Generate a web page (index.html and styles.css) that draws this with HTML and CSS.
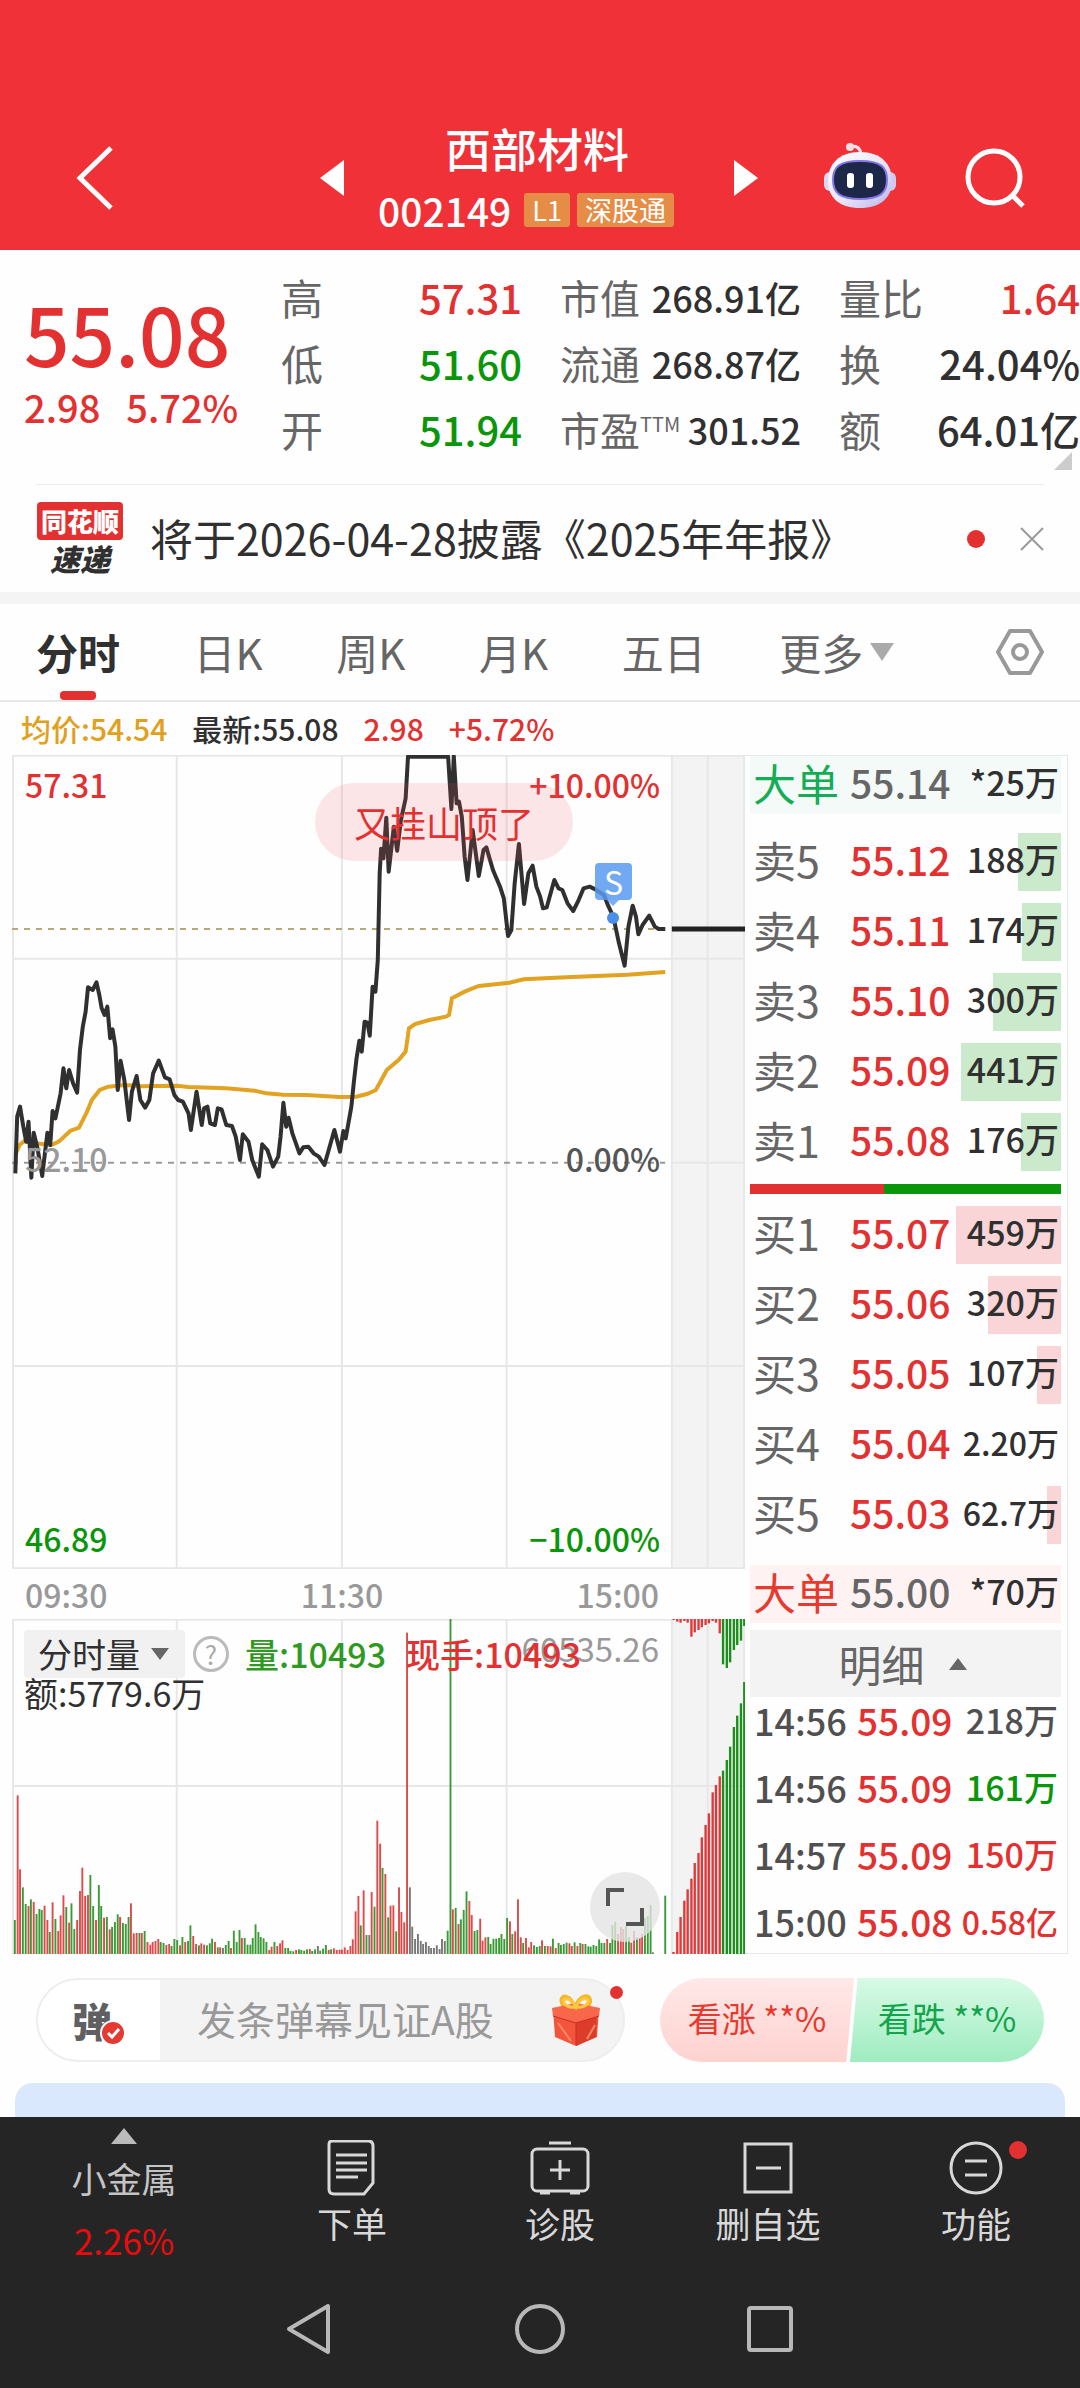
FILE: index.html
```html
<!DOCTYPE html>
<html lang="zh-CN">
<head>
    <meta charset="UTF-8">
    <meta name="viewport" content="width=device-width, initial-scale=1.0">
    <title>西部材料 002149</title>
    <link rel="stylesheet" href="styles.css">
</head>
<body>
    <header class="top-bar">
        <button class="icon-btn back" aria-label="返回">
            <svg width="40" height="66" viewBox="0 0 40 66"><path d="M36 3 5 33l31 30" fill="none" stroke="#fff" stroke-width="5"/></svg>
        </button>
        <div class="stock-switch">
            <button class="icon-btn" aria-label="上一只">
                <svg width="24" height="36" viewBox="0 0 24 36"><path d="M24 0v36L0 18z" fill="#fff"/></svg>
            </button>
            <div class="stock-title">
                <h1>西部材料</h1>
                <div class="stock-code">002149 <span class="tag">L1</span><span class="tag">深股通</span></div>
            </div>
            <button class="icon-btn" aria-label="下一只">
                <svg width="24" height="36" viewBox="0 0 24 36"><path d="M0 0v36l24-18z" fill="#fff"/></svg>
            </button>
        </div>
        <button class="icon-btn" aria-label="智能助手">
            <svg width="72" height="68" viewBox="0 0 72 68">
                <defs>
                    <linearGradient id="shell" x1="0" y1="0" x2="1" y2="1"><stop offset="0" stop-color="#fff"/><stop offset=".55" stop-color="#e9e5f8"/><stop offset="1" stop-color="#b9b3e8"/></linearGradient>
                </defs>
                <path d="M26 4q10-1 11 8" fill="none" stroke="#f6e4ee" stroke-width="3"/>
                <circle cx="26" cy="5" r="4" fill="#fbdde2"/>
                <rect x="0" y="30" width="14" height="19" rx="6" fill="#dcd8f4"/>
                <rect x="58" y="30" width="14" height="19" rx="6" fill="#cfcaf0"/>
                <path d="M36 10c21 0 32 12 32 29S56 66 36 66 4 56 4 39s11-29 32-29z" fill="url(#shell)"/>
                <path d="M36 19c21 0 27 6 27 19s-7 19-27 19S9 51 9 38s6-19 27-19z" fill="#1d2747" stroke="#8377e8" stroke-width="2"/>
                <rect x="23" y="31" width="7" height="15" rx="3" fill="#fff"/>
                <rect x="42" y="31" width="7" height="15" rx="3" fill="#fff"/>
            </svg>
        </button>
        <button class="icon-btn" aria-label="搜索">
            <svg width="62" height="62" viewBox="0 0 62 62" fill="none" stroke="#fff" stroke-width="5"><circle cx="30" cy="30" r="26"/><path d="m48 48 11 11"/></svg>
        </button>
    </header>

    <section class="quote">
        <div class="quote-main">
            <div class="last-price">55.08</div>
            <div class="change"><span>2.98</span><span>5.72%</span></div>
        </div>
        <dl>
            <div><dt>高</dt><dd class="up">57.31</dd></div>
            <div><dt>低</dt><dd class="down">51.60</dd></div>
            <div><dt>开</dt><dd class="down">51.94</dd></div>
        </dl>
        <dl class="compact">
            <div><dt>市值</dt><dd>268.91亿</dd></div>
            <div><dt>流通</dt><dd>268.87亿</dd></div>
            <div><dt>市盈<sup>TTM</sup></dt><dd>301.52</dd></div>
        </dl>
        <dl>
            <div><dt>量比</dt><dd class="up">1.64</dd></div>
            <div><dt>换</dt><dd>24.04%</dd></div>
            <div><dt>额</dt><dd>64.01亿</dd></div>
        </dl>
        <i class="corner"></i>
    </section>

    <section class="notice">
        <div class="notice-logo"><b>同花顺</b><em>速递</em></div>
        <a href="#">将于2026-04-28披露《2025年年报》</a>
        <i class="dot"></i>
        <button class="icon-btn" aria-label="关闭">
            <svg width="24" height="24" viewBox="0 0 24 24" stroke="#999" stroke-width="2"><path d="m1 1 22 22M23 1 1 23"/></svg>
        </button>
    </section>

    <nav class="tabs">
        <button class="active">分时</button>
        <button>日K</button>
        <button>周K</button>
        <button>月K</button>
        <button>五日</button>
        <button>更多<svg width="24" height="18" viewBox="0 0 24 18"><path d="M0 0h24L12 18z" fill="#aaa"/></svg></button>
        <button class="setting" aria-label="设置">
            <svg width="48" height="48" viewBox="0 0 48 48" fill="none" stroke="#999" stroke-width="4"><path d="M14 3h20l12 21-12 21H14L2 24z" stroke-linejoin="round"/><circle cx="24" cy="24" r="7"/></svg>
        </button>
    </nav>

    <div class="avg-line">
        <span class="avg">均价:54.54</span><span>最新:55.08</span><span class="up">2.98</span><span class="up">+5.72%</span>
    </div>

    <main class="board">
        <div class="charts">
            <div class="price-chart">
                <svg viewBox="26 45 1553 2442" preserveAspectRatio="none">
                    <rect class="side" x="1424" y="45" width="155" height="2442"/>
                    <path class="grid" d="M28 47H1579M28 656H1579M1424 1268H1579M28 1878H1579M28 2485H1579M28 45V2487M375 45V2487M725 45V2487M1074 45V2487M1424 45V2487M1500 45V2487M1577 45V2487"/>
                    <path class="dash last" d="M26 567H1410"/>
                    <path class="dash" d="M26 1268H1410"/>
                    <polyline class="avg-path" id="avg-path"/>
                    <polyline class="price-path" id="price-path"/>
                    <path class="auction" d="M1424 567H1579"/>
                </svg>
                <span class="lb high up">57.31</span>
                <span class="lb high-pct up">+10.00%</span>
                <span class="lb mid">52.10</span>
                <span class="lb mid-pct">0.00%</span>
                <span class="lb low down">46.89</span>
                <span class="lb low-pct down">−10.00%</span>
                <span class="bubble">又挂山顶了</span>
                <span class="sell-mark">S</span>
            </div>
            <div class="time-axis"><span>09:30</span><span>11:30</span><span>15:00</span></div>
            <div class="vol-chart">
                <svg viewBox="26 57 1553 1005" preserveAspectRatio="none">
                    <rect class="side" x="1424" y="57" width="155" height="1005"/>
                    <path class="grid" d="M28 59H1579M28 558H1579M28 57V1062M375 57V1062M725 57V1062M1074 57V1062M1424 57V1062M1500 57V1062M1577 57V1062"/>
                    <g id="vol-bars"></g>
                </svg>
                <div class="vol-info">
                    <button class="vol-type">分时量<svg width="18" height="12" viewBox="0 0 18 12"><path d="M0 0h18L9 12z" fill="#666"/></svg></button>
                    <button class="help" aria-label="说明">?</button>
                    <span class="vol">量:10493</span>
                    <span class="up">现手:10493</span>
                </div>
                <div class="vol-amount">额:5779.6万</div>
                <span class="vol-max">60535.26</span>
                <button class="expand" aria-label="全屏">
                    <svg width="38" height="38" viewBox="0 0 38 38" fill="none" stroke="#555" stroke-width="4"><path d="M2 18V2h16M36 20v16H20"/></svg>
                </button>
            </div>
        </div>

        <div class="book">
            <table class="big sell-big"><tr><th>大单</th><td class="price">55.14</td><td class="qty">*25万</td></tr></table>
            <table id="sell"></table>
            <div class="ratio"><i style="width:43%"></i></div>
            <table id="buy"></table>
            <table class="big buy-big"><tr><th>大单</th><td class="price">55.00</td><td class="qty">*70万</td></tr></table>
            <button class="detail">明细<svg width="18" height="12" viewBox="0 0 18 12"><path d="M0 12h18L9 0z" fill="#666"/></svg></button>
            <table class="ticks">
                <tr><th>14:56</th><td class="price">55.09</td><td class="qty flat">218万</td></tr>
                <tr><th>14:56</th><td class="price">55.09</td><td class="qty down">161万</td></tr>
                <tr><th>14:57</th><td class="price">55.09</td><td class="qty up">150万</td></tr>
                <tr><th>15:00</th><td class="price">55.08</td><td class="qty small up">0.58亿</td></tr>
            </table>
        </div>
    </main>

    <section class="danmu">
        <div class="danmu-box">
            <button class="danmu-switch" aria-label="弹幕开关">弹
                <svg width="26" height="26" viewBox="0 0 26 26"><circle cx="13" cy="13" r="12" fill="#e43a32" stroke="#fff" stroke-width="2"/><path d="m8 13 4 4 7-8" fill="none" stroke="#fff" stroke-width="3"/></svg>
            </button>
            <input type="text" placeholder="发条弹幕见证A股" aria-label="弹幕">
            <svg class="gift" width="50" height="54" viewBox="0 0 50 54">
                <path d="M24 16C20 0 8 1 11 10c1 5 8 6 13 6 6 0 14-1 15-7C40 0 28 1 24 16z" fill="none" stroke="#f8b62c" stroke-width="4"/>
                <path d="m2 16 23-5 23 5-2 28-21 9L4 44z" fill="#f2553b"/>
                <path d="m25 24 21-6-1 26-20 9z" fill="#dd3c2b"/>
                <path d="m1 15 24-5 24 5-1 8-23 7-23-7z" fill="#f9674a"/>
                <path d="m2 23 23 7 23-7M25 30v22" fill="none" stroke="#c9301f" stroke-width="1"/>
                <path d="m7 30 13 18M36 46l8-14" stroke="#ff8a66" stroke-width="2"/>
                <path d="M25 14C20 4 11 4 13 10c1 3 7 5 12 4 5 1 11-1 12-5 1-5-8-5-12 5z" fill="none" stroke="#fbc93f" stroke-width="3"/>
            </svg>
            <i class="dot"></i>
        </div>
        <div class="vote">
            <button class="vote-up">看涨 **%</button>
            <button class="vote-down">看跌 **%</button>
        </div>
    </section>
    <div class="next-card"></div>

    <footer>
        <nav class="tool-bar">
            <a href="#" class="sector">
                <svg width="26" height="16" viewBox="0 0 26 16"><path d="M0 16h26L13 0z" fill="#bbb"/></svg>
                <span>小金属</span>
                <strong>2.26%</strong>
            </a>
            <a href="#">
                <svg width="56" height="56" viewBox="0 0 56 56"><path d="M8 1h36q5 0 5 5v37l-9 11H10q-5 0-5-5V4q0-3 3-3z"/><path d="M12 15h31M12 23h31M12 30h31M12 37h22"/></svg>
                <span>下单</span>
            </a>
            <a href="#">
                <svg width="60" height="56" viewBox="0 0 60 56"><rect x="2" y="9" width="56" height="42" rx="5"/><path d="M19 3h22M30 20v20M20 30h20M10 53h10M40 53h10"/></svg>
                <span>诊股</span>
            </a>
            <a href="#">
                <svg width="52" height="56" viewBox="0 0 52 56"><path d="M3 4h46v48H3zM14 28h25"/></svg>
                <span>删自选</span>
            </a>
            <a href="#">
                <svg width="54" height="56" viewBox="0 0 54 56"><circle cx="27" cy="28" r="25"/><path d="M16 21h22M16 35h22"/></svg>
                <span>功能</span>
                <i class="dot"></i>
            </a>
        </nav>
        <div class="sys-nav">
            <button class="icon-btn" aria-label="返回"><svg width="50" height="54" viewBox="0 0 50 54"><path d="M43 4v46L4 27z"/></svg></button>
            <button class="icon-btn" aria-label="主页"><svg width="50" height="54" viewBox="0 0 50 54"><circle cx="25" cy="27" r="23"/></svg></button>
            <button class="icon-btn" aria-label="最近任务"><svg width="50" height="54" viewBox="0 0 50 54"><rect x="4" y="6" width="42" height="42" rx="2"/></svg></button>
        </div>
    </footer>

    <script src="chart.js"></script>
</body>
</html>
```
FILE: styles.css
```css
:root {
  --red: #e33030;
  --green: #0a960a;
  --brand: #f03137;
  --text: #303030;
  --gray: #666;
  --line: #e6e8e8;
}

* { box-sizing: border-box; }

body {
  margin: 0;
  background: #fefefe;
  color: var(--text);
  font-family: "Noto Sans CJK SC", sans-serif;
  font-size: 36px;
}

button {
  font: inherit;
  color: inherit;
  border: none;
  background: none;
  padding: 0;
  cursor: pointer;
}

a { color: inherit; text-decoration: none; }
h1, dl, dd { margin: 0; }
svg { display: block; }

.icon-btn { display: flex; }
.up { color: var(--red); }
.down { color: var(--green); }
.dot {
  width: 18px;
  height: 18px;
  border-radius: 50%;
  background: var(--red);
}

/* 顶部 */
.top-bar {
  display: flex;
  align-items: center;
  height: 250px;
  padding: 112px 54px 6px 75px;
  background: var(--brand);
  color: #fff;
}
.back { margin-right: auto; }
.stock-switch {
  display: flex;
  align-items: center;
  justify-content: space-between;
  width: 438px;
  margin-right: 66px;
}
.stock-switch + .icon-btn { margin-right: 68px; margin-bottom: 4px; }
.stock-title { text-align: center; }
.stock-title h1 {
  font-size: 46px;
  line-height: 64px;
  font-weight: 500;
}
.stock-code {
  display: flex;
  align-items: center;
  gap: 7px;
  margin-right: 26px;
  font-size: 39px;
  line-height: 62px;
  font-weight: 500;
}
.stock-title h1 { margin-right: 4px; }
.tag {
  padding: 0 8px;
  border-radius: 3px;
  background: #e58d47;
  font-size: 27px;
  line-height: 34px;
  font-weight: 400;
}
.stock-code .tag:first-of-type { margin-left: 6px; }

/* 行情 */
.quote {
  position: relative;
  display: grid;
  grid-template-columns: 219px 1fr 1fr 1fr;
  gap: 38px;
  height: 234px;
  padding: 14px 0 0 24px;
}
.quote-main { color: var(--red); font-weight: 500; }
.last-price {
  margin-top: 24px;
  font-size: 80px;
  line-height: 88px;
}
.change {
  display: flex;
  gap: 26px;
  font-size: 38px;
  line-height: 62px;
}
.quote dl div {
  display: flex;
  justify-content: space-between;
  align-items: center;
  height: 66px;
}
.quote dt { font-size: 42px; color: var(--gray); line-height: 60px; }
.quote dd { font-size: 40px; line-height: 60px; font-weight: 500; }
.quote .compact dt { font-size: 40px; }
.quote .compact dd { font-size: 36px; }
.quote sup { font-size: 20px; line-height: 20px; vertical-align: 14px; }
.corner {
  position: absolute;
  right: 8px;
  bottom: 14px;
  border-left: 18px solid transparent;
  border-bottom: 18px solid #ccc;
}

/* 公告 */
.notice {
  display: flex;
  align-items: center;
  height: 108px;
  margin: 0 36px;
  border-top: 1px solid #eee;
  font-size: 43px;
}
.notice a { margin: 0 auto 4px 26px; line-height: 60px; }
.notice .dot { margin-right: 35px; }
.notice-logo {
  display: flex;
  flex-direction: column;
  align-items: center;
  width: 88px;
  font-size: 26px;
  font-weight: 900;
}
.notice-logo b {
  width: 86px;
  border-radius: 4px;
  background: var(--red);
  color: #fff;
  line-height: 38px;
  text-align: center;
}
.notice-logo em { font-size: 30px; line-height: 36px; }

/* 周期 */
.tabs {
  display: flex;
  align-items: center;
  justify-content: space-between;
  height: 110px;
  padding: 0 36px;
  border-top: 12px solid #f4f4f4;
  border-bottom: 2px solid #e8e8e8;
  color: var(--gray);
  font-size: 42px;
}
.tabs button {
  position: relative;
  display: flex;
  align-items: center;
  gap: 7px;
  line-height: 96px;
}
.tabs .active { color: var(--text); font-weight: 700; }
.tabs .active::after {
  content: "";
  position: absolute;
  left: 24px;
  bottom: 0;
  width: 36px;
  height: 9px;
  border-radius: 4px;
  background: var(--red);
}
.tabs .setting { margin-left: 28px; }

.avg-line {
  display: flex;
  gap: 25px;
  padding: 0 21px;
  font-size: 30px;
  line-height: 53px;
  font-weight: 500;
}
.avg { color: #e0a020; }

/* 图表 */
.board {
  display: grid;
  grid-template-columns: 733fr 323fr;
  padding: 0 12px;
}
.charts svg { width: 100%; height: 100%; }
.side { fill: #f3f3f3; }
.grid, .dash, .avg-path, .price-path, .auction {
  fill: none;
  stroke: var(--line);
  stroke-width: 2px;
  vector-effect: non-scaling-stroke;
}
.charts .dash { stroke: #999; stroke-dasharray: 6 6; }
.charts .last { stroke: #b5a878; }
.charts .avg-path { stroke: #e2a222; stroke-width: 4px; }
.charts .price-path { stroke: #303030; stroke-width: 4px; stroke-linejoin: round; }
.charts .auction { stroke: #222; stroke-width: 5px; }

.price-chart { position: relative; height: 814px; }
.lb {
  position: absolute;
  font-size: 32px;
  line-height: 48px;
  font-weight: 500;
  left: 13px;
}
.high, .high-pct { top: 5px; }
.mid, .mid-pct { top: 379px; color: #999; }
.low, .low-pct { bottom: 7px; }
.high-pct, .mid-pct, .low-pct { left: auto; right: 85px; }
.mid-pct { color: #555; }
.bubble {
  position: absolute;
  left: 303px;
  top: 28px;
  padding: 0 39px;
  border-radius: 39px;
  background: rgba(240, 80, 90, 0.14);
  color: var(--red);
  font-size: 36px;
  line-height: 78px;
}
.sell-mark {
  position: absolute;
  left: 583px;
  top: 108px;
  width: 37px;
  border-radius: 4px;
  background: rgba(88, 155, 240, 0.85);
  color: #fff;
  font-size: 32px;
  line-height: 37px;
  text-align: center;
}
.sell-mark::before {
  content: "";
  position: absolute;
  left: 12px;
  top: 37px;
  border: 6px solid transparent;
  border-top-color: #7bb1f4;
  border-bottom: none;
}
.sell-mark::after {
  content: "";
  position: absolute;
  left: 12px;
  top: 49px;
  width: 12px;
  height: 12px;
  border-radius: 50%;
  background: #4a8fe8;
}
.time-axis {
  display: flex;
  justify-content: space-between;
  padding: 0 86px 0 13px;
  color: #999;
  font-size: 32px;
  line-height: 50px;
  font-weight: 500;
}

.vol-chart { position: relative; height: 335px; }
.vol-info, .vol-amount {
  position: absolute;
  top: 11px;
  left: 12px;
  display: flex;
  align-items: center;
  font-size: 34px;
  line-height: 48px;
  white-space: nowrap;
}
.vol-info span { font-weight: 500; }
.vol-info .vol { color: #2f9a22; margin: 0 20px 0 16px; }
.vol-amount { top: 50px; }
.charts .vol-info svg { width: 18px; height: 12px; }
.vol-type {
  display: flex;
  align-items: center;
  gap: 11px;
  padding: 0 16px 0 14px;
  border-radius: 4px;
  background: #f1f1f1;
}
.help {
  width: 36px;
  height: 36px;
  margin-left: 8px;
  border: 3px solid #bbb;
  border-radius: 50%;
  color: #aaa;
  font-size: 26px;
  line-height: 28px;
}
.vol-max {
  position: absolute;
  top: 5px;
  right: 86px;
  color: #999;
  font-size: 33px;
  line-height: 48px;
  z-index: -1;
}
.expand {
  position: absolute;
  right: 85px;
  bottom: 12px;
  display: grid;
  place-items: center;
  width: 70px;
  height: 70px;
  border-radius: 50%;
  background: rgba(228, 228, 228, 0.8);
}
.charts .expand svg { width: 38px; height: 38px; }

/* 盘口 */
.book {
  padding: 0 6px 0 5px;
  border: 1px solid #e8e8e8;
  border-width: 1px 1px 1px 0;
}
.book table {
  width: 100%;
  table-layout: fixed;
  border-collapse: collapse;
}
.book th, .book td { padding: 0 0 6px; white-space: nowrap; text-align: left; line-height: 52px; }
.book th {
  width: 100px;
  padding-left: 3px;
  color: var(--gray);
  font-size: 43px;
  font-weight: 400;
}
.book .price { width: 104px; font-size: 39px; font-weight: 500; color: var(--red); }
.book .qty {
  position: relative;
  padding-right: 2px;
  font-size: 34px;
  font-weight: 500;
  text-align: right;
}
.book .small { font-size: 32px; }
.book .big .price { color: var(--gray); }
.book .sell-big th { color: #14ad55; }
.book .buy-big th { color: #e8392f; }
.sell-big { margin-bottom: 13px; background: #f3faf7; }
.buy-big { margin: 15px 0 7px; background: #fff2f3; }
#sell td, #buy td, #sell th, #buy th { padding-top: 3px; padding-bottom: 9px; line-height: 58px; }
.qty i {
  position: absolute;
  right: 0;
  top: 6px;
  height: 58px;
}
.qty span { position: relative; }
#sell i { background: #cbe9cb; }
#buy i { background: #f9d5d8; }
.ratio { margin: 7px 0 6px; height: 10px; background: var(--green); }
.ratio i { display: block; height: 100%; background: var(--red); }
.detail {
  display: flex;
  align-items: center;
  justify-content: center;
  gap: 24px;
  width: 100%;
  padding-right: 6px;
  background: #f3f3f3;
  color: var(--gray);
  font-size: 43px;
  line-height: 67px;
}
.book .ticks th, .book .ticks td { line-height: 46px; padding-bottom: 21px; }
.book .ticks tr:last-child > * { padding-bottom: 9px; }
.book .ticks th { padding-left: 4px; width: 107px; font-size: 36px; font-weight: 500; color: #505050; }
.book .ticks .price { width: 96px; font-size: 37px; }
.book .ticks .qty { padding-right: 3px; }
.book .ticks .flat { color: #505050; }

/* 弹幕 */
.danmu {
  display: flex;
  justify-content: space-between;
  padding: 24px 36px 21px;
}
.danmu-box {
  position: relative;
  display: flex;
  align-items: center;
  flex: 0 1 589px;
  min-width: 0;
  height: 84px;
  border: 2px solid #eee;
  border-radius: 42px;
  background: linear-gradient(90deg, #fff 122px, #f4f3f4 122px);
}
.danmu-switch {
  position: relative;
  flex: none;
  width: 122px;
  padding-right: 14px;
  color: #606062;
  font-size: 40px;
  font-weight: 900;
  line-height: 60px;
}
.danmu-switch svg { position: absolute; left: 62px; bottom: 4px; }
.danmu input {
  flex: 1;
  min-width: 0;
  padding: 0 0 4px 37px;
  border: none;
  background: none;
  font: inherit;
  font-size: 39px;
}
.danmu input::placeholder { color: #999; opacity: 1; }
.gift { flex: none; margin-right: 22px; }
.danmu-box .dot { position: absolute; right: 0; top: 6px; width: 13px; height: 13px; }
.vote { display: flex; flex: none; width: 384px; }
.vote button { flex: 1; padding-bottom: 4px; font-size: 34px; line-height: 80px; white-space: nowrap; }
.vote .vote-up {
  margin-right: -4px;
  border-radius: 42px 0 0 42px;
  background: linear-gradient(#ffe9e8, #fdd2cf);
  color: #e8392f;
  clip-path: polygon(0 0, 100% 0, 96% 100%, 0 100%);
}
.vote .vote-down {
  border-radius: 0 42px 42px 0;
  background: linear-gradient(#d8fae6, #9fecc0);
  color: #14a44d;
  clip-path: polygon(4% 0, 100% 0, 100% 100%, 0 100%);
}
.next-card {
  height: 34px;
  margin: 0 15px;
  border-radius: 18px 18px 0 0;
  background: #d9e8fd;
}

/* 底部 */
footer { background: #252525; color: #d8d8d8; padding-bottom: 32px; }
.tool-bar {
  display: grid;
  grid-template-columns: 31fr 26fr 26fr 26fr 26fr;
  height: 153px;
}
.tool-bar a {
  position: relative;
  display: flex;
  flex-direction: column;
  align-items: center;
  padding-top: 23px;
  font-size: 35px;
  line-height: 54px;
}
.tool-bar svg { fill: none; stroke: #d8d8d8; stroke-width: 3; }
.tool-bar .sector { padding-top: 11px; color: #c4c4c4; }
.tool-bar .sector svg { stroke: none; }
.sector span { margin-top: 7px; }
.sector strong { margin-top: 8px; color: #e80c0c; font-weight: 400; font-size: 35px; }
.tool-bar .dot { position: absolute; right: 53px; top: 24px; }
.sys-nav {
  display: flex;
  justify-content: center;
  gap: 180px;
  padding-top: 32px;
}
.sys-nav svg { fill: none; stroke: #b8b8b8; stroke-width: 4; stroke-linejoin: round; }
```
FILE: chart.js
```js
// 五档数据: [名称, 价格, 数量, 柱宽]
const sell = [
    ['卖5', '55.12', '188万', 43],
    ['卖4', '55.11', '174万', 39],
    ['卖3', '55.10', '300万', 68],
    ['卖2', '55.09', '441万', 100],
    ['卖1', '55.08', '176万', 40]
];
const buy = [
    ['买1', '55.07', '459万', 105],
    ['买2', '55.06', '320万', 73],
    ['买3', '55.05', '107万', 24],
    ['买4', '55.04', '2.20万', 0],
    ['买5', '55.03', '62.7万', 14]
];

function renderBook(id, rows) {
    document.getElementById(id).innerHTML = rows.map(([name, price, qty, w]) => `
        <tr>
            <th>${name}</th>
            <td class="price">${price}</td>
            <td class="qty${qty.includes('.') ? ' small' : ''}"><i style="width:${w}px"></i><span>${qty}</span></td>
        </tr>
    `).join('');
}
renderBook('sell', sell);
renderBook('buy', buy);

// 分时线
const price = `33,1300 37,1130 43,1100 50,1160 56,1205 61,1145 67,1313 72,1178 80,1225 90,1308 101,1178 107,1215 112,1113 118,1135
129,1060 135,985 141,1045 147,990 155,1028 164,1058 170,930 176,860 182,815 187,742 197,750 205,727 211,765 216,805 222,825 228,800
234,895 239,868 245,920 250,1050 256,962 264,1020 274,1140 280,1055 290,1008 298,1080 308,1103 317,1080 325,1000 337,962 350,1012
360,1018 370,1065 378,1080 388,1085 400,1120 405,1170 417,1055 428,1155 433,1105 440,1100 446,1150 456,1155 462,1105 470,1108
480,1155 492,1158 500,1190 509,1260 515,1183 527,1205 535,1260 549,1310 556,1213 567,1230 579,1280 590,1250 595,1190 601,1088
607,1160 612,1133 620,1180 635,1240 643,1222 654,1220 665,1240 676,1250 688,1275 697,1230 709,1170 721,1235 728,1173 733,1195
745,1100 750,1030 756,955 762,902 767,935 773,845 779,848 784,887 790,740 796,755 801,660 805,400 808,326 813,355 819,233 824,395
835,260 842,332 850,240 860,175 865,50 950,50 957,207 962,48 968,190 973,185 979,230 985,350 991,420 1002,270 1015,408 1025,330
1031,322 1045,390 1060,440 1068,475 1077,588 1084,570 1091,430 1100,312 1111,492 1120,400 1129,377 1137,440 1145,470 1151,505
1159,502 1175,420 1184,445 1192,450 1203,490 1215,513 1225,485 1237,445 1250,440 1262,448 1280,465 1290,500 1300,530 1312,610
1324,677 1332,560 1341,497 1348,530 1353,583 1362,555 1376,527 1388,560 1396,567 1410,567`;
const avg = `33,1245 42,1215 55,1200 75,1210 110,1215 125,1205 150,1172 168,1163 185,1115 195,1080 212,1050 230,1040 265,1035
300,1039 375,1037 400,1041 480,1045 540,1052 565,1060 600,1064 650,1065 720,1071 755,1070 778,1062 797,1050 820,990 845,960 860,935
867,865 880,852 910,840 945,830 952,825 958,775 985,755 1015,738 1080,728 1110,718 1200,712 1330,704 1410,696`;
document.getElementById('price-path').setAttribute('points', price);
document.getElementById('avg-path').setAttribute('points', avg);

// 成交量, r 涨 g 跌 k 平
const volume = `102g 476r 254r 200g 150g 144r 164g 156r 120g 135g 132g 145r 102r 66g 155r 105g 69r 116r 176r 141g 94r 152g 75g 102r
189r 259r 174r 177r 237g 144g 102r 207g 144g 109r 111g 74r 81g 96g 119g 111r 93g 90g 111g 152r 62r 63r 63g 63r 69g 36r 28r 36r 39r
45r 36g 33g 27r 30r 24g 45g 42g 26r 51g 36r 39g 86g 54r 30r 26g 32r 28r 26g 32g 46g 36r 20g 20r 18k 27g 39g 18r 70g 36g 72g 48r 48g
28g 28g 48g 89g 66g 51g 47g 36g 12r 22r 36g 24r 32r 41r 18g 18g 9g 8g 12r 14g 12g 10g 14g 15r 9g 14g 24k 10g 16g 27g 12r 14g 17r 12r
13r 13r 20r 12r 24r 44r 128r 174r 86g 191r 57g 57k 186r 142g 400r 331r 258g 240r 110g 145r 146r 68g 200r 126r 95r 964r 200k 82k 45k
60k 39k 30k 36k 24k 18k 18k 26k 15k 45k 39k 70g 1005g 134r 138g 90r 104g 132g 188g 159r 117r 69g 72g 106r 40r 50r 51g 30g 46g 46g 48g
60g 45g 108g 98r 60g 68r 164r 50r 33g 48r 20r 36r 26g 21g 24g 41r 24g 24r 23r 46g 18r 33g 27g 30g 34g 32r 24r 35g 24r 33g 30r 30g 23g
22g 27g 24g 44g 33g 33g 45r 33g 87g 96g 60r 81r 75r 84g 51g 34r 69r 50g 48r 60r 108g 114g 147g 5k`.split(/\s+/);
const colors = { r: '#dc4a4a', g: '#3a9a35', k: '#777' };
let bars = '';
volume.forEach((v, i) => {
    const h = parseInt(v);
    bars += `<rect x="${Math.round(30 + i * 5.73)}" y="${1062 - h}" width="4" height="${h}" fill="${colors[v.slice(-1)]}"/>`;
});
bars += `<rect x="1408" y="887" width="4" height="175" fill="#3a9a35"/>`;

// 集合竞价
const match = [6, 66, 111, 160, 194, 226, 273, 303, 350, 387, 422, 485, 507, 533, 550, 582, 622, 681, 715, 752, 816];
const rest = [3, 8, 11, 6, 11, 53, 40, 33, 25, 18, 13, 6, 11, 43, 136, 147, 130, 93, 78, 65, 21];
match.forEach((h, i) => {
    const x = Math.round(1425 + i * 7.5);
    const c = i < 14 ? '#de3a3c' : '#1c8f1c';
    bars += `<rect x="${x}" y="${1062 - h}" width="5" height="${h}" fill="${c}"/>`;
    bars += `<rect x="${x}" y="57" width="5" height="${rest[i]}" fill="${c}"/>`;
});
document.getElementById('vol-bars').innerHTML = bars;
```
